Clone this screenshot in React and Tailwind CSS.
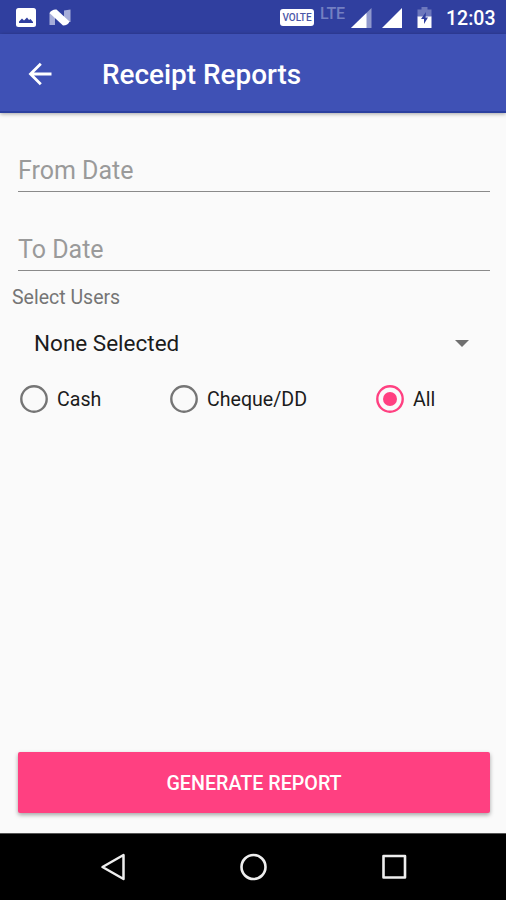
import { useState } from 'react';

function StatusBar() {
  return (
    <div className="flex h-[34px] items-start bg-[#303f9f] text-white">
      <svg className="mt-[8px] ml-[16px] h-[19px] w-[20px]" viewBox="0 0 20 19">
        <rect width="20" height="19" rx="2.5" fill="#fff" />
        <path d="M3 15V13.500L6 10.500 8 12.500 11 9.500 13 12 14.500 11 17 14V15Z" fill="#303f9f" />
      </svg>
      <svg className="mt-[9px] ml-[13px] h-[17px] w-[22px]" viewBox="0 0 22 17">
        <path d="M0.500 4H6V16H0.500Z M15 1.500L21.500 0.500V13H15Z" fill="#a6add9" />
        <path d="M0.500 4Q3 0 7.500 0.500L20.500 12.500Q19 16.500 14 16.500Z" fill="#fff" />
      </svg>

      <div className="mt-[9px] ml-[209px] flex h-[17px] w-[34px] items-center justify-center rounded-[3px] bg-white text-[10px] font-medium text-[#4b57a8]">
        VOLTE
      </div>
      <span className="mt-[5px] ml-[6px] w-[26px] text-[16px] leading-[18px] font-medium tracking-[-0.2px] text-[#7480c2]">
        LTE
      </span>
      <svg className="mt-[8px] ml-[5px] h-[20px] w-[21px]" viewBox="0 0 21 20">
        <path d="M0 20 20.500 0V20Z" fill="#8f98cd" />
        <path d="M0 20 15.500 4.900V20Z" fill="#fff" />
      </svg>
      <svg className="mt-[8px] ml-[10px] h-[20px] w-[20px]" viewBox="0 0 20 20">
        <path d="M0 20 20 0V20Z" fill="#fff" />
      </svg>
      <svg className="mt-[7px] ml-[15px] h-[21px] w-[15px]" viewBox="0 0 15 21">
        <path d="M4.500 0H10.500V2.500H14.500V10H0.500V2.500H4.500Z" fill="#6d78bd" />
        <path d="M0.500 9.500H14.500V21H0.500Z" fill="#fff" />
        <path d="M9 5 4 12H7V17L11 10.500H8.500Z" fill="#303f9f" />
      </svg>
      <span className="mt-[7px] ml-[14px] text-[19.500px] leading-[24px] font-medium whitespace-nowrap">12:03</span>
    </div>
  );
}

function AppBar() {
  return (
    <header className="z-10 flex h-[79px] items-center border-b-2 border-[#2b409f] bg-[#3f51b5] text-white shadow-[0_1px_4px_rgba(0,0,0,0.35)]">
      <svg className="mt-[3px] ml-[28px] h-[24px] w-[24px]" viewBox="0 0 24 24" fill="none" stroke="#fff" strokeWidth="2.800">
        <path d="M23.500 12H2.500M12.800 1.700 2.500 12 12.800 22.300" />
      </svg>
      <h1 className="mt-[4px] ml-[50px] text-[27.900px] font-medium whitespace-nowrap">Receipt Reports</h1>
    </header>
  );
}

function DateField({ label }) {
  return (
    <div className="mr-[16px] ml-[18px] flex h-[79px] items-end border-b-[1.500px] border-[#8a8a8a] pb-[4px] text-[25px] leading-[32px] text-[#9a9a9a]">
      {label}
    </div>
  );
}

function RadioOption({ label, checked, onSelect }) {
  return (
    <button type="button" onClick={onSelect} className="flex items-center gap-[9px]">
      <svg className="h-[28px] w-[28px]" viewBox="0 0 28 28">
        <circle cx="14" cy="14" r="12.700" fill="none" stroke={checked ? '#ff4081' : '#757575'} strokeWidth="2.400" />
        {checked && <circle cx="14" cy="14" r="7" fill="#ff4081" />}
      </svg>
      <span className="pt-[3px] text-[19.600px] leading-[28px] text-[#1c1c1c]">{label}</span>
    </button>
  );
}

function NavigationBar() {
  return (
    <nav className="flex h-[67px] items-center border-t border-[#555] bg-black">
      <svg className="ml-[100px] h-[28px] w-[28px]" viewBox="0 0 28 28" fill="none" stroke="#eee" strokeWidth="2.500" strokeLinejoin="round">
        <path d="M23.500 2V26L2.500 14Z" />
      </svg>
      <svg className="ml-[111px] h-[28px] w-[28px]" viewBox="0 0 28 28" fill="none" stroke="#eee" strokeWidth="2.600">
        <circle cx="14.500" cy="14" r="12" />
      </svg>
      <svg className="ml-[113px] h-[28px] w-[28px]" viewBox="0 0 28 28" fill="none" stroke="#eee" strokeWidth="2.600" strokeLinejoin="round">
        <rect x="3.500" y="3" width="21.500" height="21.500" />
      </svg>
    </nav>
  );
}

export default function App() {
  const [mode, setMode] = useState('All');

  return (
    <div className="flex h-[900px] w-[506px] flex-col overflow-hidden bg-[#fafafa] font-[Roboto,sans-serif]">
      <StatusBar />
      <AppBar />
      <main className="flex flex-1 flex-col">
        <DateField label="From Date" />
        <DateField label="To Date" />
        <p className="mt-[15px] ml-[12px] text-[19.500px] leading-[24px] text-[#757575]">Select Users</p>
        <div className="mt-[17px] flex h-[32px] items-center justify-between pr-[37px] pl-[34px]">
          <span className="pt-[2px] text-[22.500px] text-[#1c1c1c]">None Selected</span>
          <svg className="h-[7px] w-[14px]" viewBox="0 0 14 7">
            <path d="M0 0H14L7 7Z" fill="#6f6f6f" />
          </svg>
        </div>
        <div className="mt-[24px] flex pl-[20px]">
          <div className="w-[150px]">
            <RadioOption label="Cash" checked={mode === 'Cash'} onSelect={() => setMode('Cash')} />
          </div>
          <div className="w-[206px]">
            <RadioOption label="Cheque/DD" checked={mode === 'Cheque/DD'} onSelect={() => setMode('Cheque/DD')} />
          </div>
          <RadioOption label="All" checked={mode === 'All'} onSelect={() => setMode('All')} />
        </div>
        <button
          type="button"
          className="mr-[16px] ml-[18px] mt-auto mb-[20px] h-[61px] rounded-[2px] bg-[#ff4081] pt-[2px] text-[19.700px] font-medium text-white shadow-[0_2px_4px_rgba(0,0,0,0.35)]"
        >
          GENERATE REPORT
        </button>
      </main>
      <NavigationBar />
    </div>
  );
}
